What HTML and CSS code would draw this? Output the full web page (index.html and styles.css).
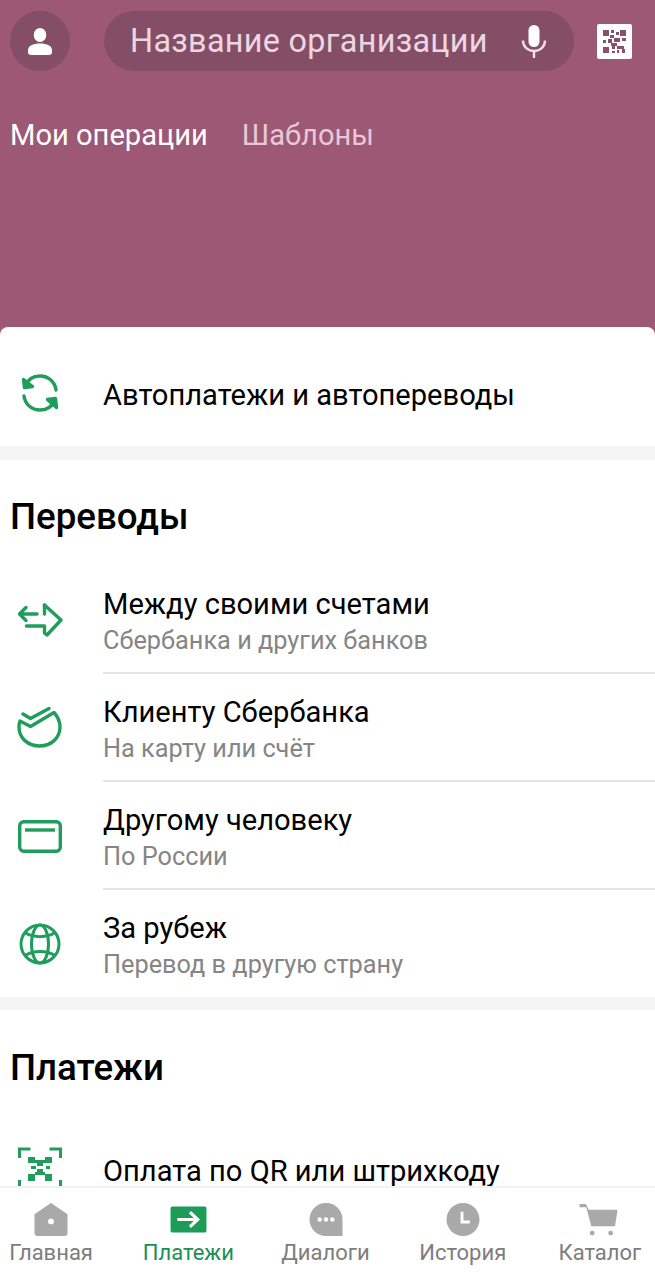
FILE: index.html
```html
<!DOCTYPE html>
<html lang="ru">
<head>
<meta charset="utf-8">
<title>Платежи</title>
<link rel="stylesheet" href="styles.css">
</head>
<body>
<header class="hero">
  <div class="topbar">
    <div class="avatar">
      <svg width="24" height="27" viewBox="0 0 24 27"><ellipse cx="12" cy="7" rx="6.300" ry="7" fill="#fff"/><path d="M0 22.500C0 17.500 5 15.500 12 15.500s12 2 12 7V24a3 3 0 0 1-3 3H3a3 3 0 0 1-3-3z" fill="#fff"/></svg>
    </div>
    <div class="search">
      <span class="search-text">Название организации</span>
      <svg class="mic" width="26" height="33" viewBox="0 0 26 33"><rect x="7.500" y="0" width="11" height="22" rx="5.500" fill="#fff"/><path d="M2 15.500c0 6.500 5 10.500 11 10.500s11-4 11-10.500" fill="none" stroke="#f3dfe9" stroke-width="2.400"/><rect x="11.800" y="26" width="2.400" height="7" fill="#f3dfe9"/></svg>
    </div>
    <div class="qr">
      <svg width="23" height="23" viewBox="0 0 23 23" fill="#87506b"><path d="M0 0h6v6H0zM8 0h3v3H8zM13 2h3v3h-3zM17 0h6v6h-6zM7 5h4v3H7zM11 8h6v4h-6zM5 9h4v4H5zM19 8h4v3h-4zM0 10h3v3H0zM8 13h6v3H8zM0 17h6v6H0zM9 16h3v3H9zM9 21h3v2H9zM14 16h7v3h-7zM19 19h3v4h-3zM14 20h2v3h-2z"/></svg>
    </div>
  </div>
  <nav class="segments">
    <span class="segment segment-active">Мои операции</span>
    <span class="segment">Шаблоны</span>
  </nav>
</header>

<main class="sheet">
  <section class="block block-auto">
    <div class="row row-single">
      <div class="row-icon">
        <svg width="44" height="44" viewBox="0 0 44 44" fill="none" stroke="#1f9d5b" stroke-width="3.400" stroke-linecap="round" stroke-linejoin="round"><path d="M7 15C10 8 15.500 5 22 5c8.500 0 15 6 16 14"/><path d="M6 25c1 8 7.500 14 16 14 6.500 0 12-3 15-10"/><path d="M5.500 8.500 6.500 16.500 14.500 15.500z" fill="#1f9d5b"/><path d="M38.500 36.500 37.500 27.500 29.500 28.500z" fill="#1f9d5b"/></svg>
      </div>
      <div class="row-body"><div class="row-title">Автоплатежи и автопереводы</div></div>
    </div>
  </section>

  <section class="block">
    <h2 class="block-title">Переводы</h2>
    <div class="row">
      <div class="row-icon">
        <svg width="46" height="34" viewBox="0 0 46 34" fill="none" stroke="#1f9d5b" stroke-width="3.400" stroke-linecap="round" stroke-linejoin="round"><path d="M20 11H2.500M9 4.500 2.500 11 9 17.500"/><path d="M27.500 2 44 17 30 32 27.500 30V23H9.500"/><path d="M27.500 2V11"/></svg>
      </div>
      <div class="row-body row-line"><div class="row-title">Между своими счетами</div><div class="row-sub">Сбербанка и других банков</div></div>
    </div>
    <div class="row">
      <div class="row-icon">
        <svg width="46" height="42" viewBox="0 0 46 42" fill="none" stroke="#1f9d5b" stroke-width="3.400" stroke-linecap="round" stroke-linejoin="round"><path d="M3 14 13.500 19.500 37 5.500C41 10 43 15 43 20 43 31 34 39 22.500 39 11 39 2 31 2 20c0-2 .3-4 1-6z"/><path d="M6 7l7.500 4.500L32 1.500"/></svg>
      </div>
      <div class="row-body row-line"><div class="row-title">Клиенту Сбербанка</div><div class="row-sub">На карту или счёт</div></div>
    </div>
    <div class="row">
      <div class="row-icon">
        <svg width="44" height="33" viewBox="0 0 44 33" fill="none" stroke="#1f9d5b" stroke-width="3.400" stroke-linecap="round"><rect x="1.700" y="1.700" width="40.600" height="29.600" rx="4"/><path d="M7 10h30" stroke-linecap="butt"/></svg>
      </div>
      <div class="row-body row-line"><div class="row-title">Другому человеку</div><div class="row-sub">По России</div></div>
    </div>
    <div class="row row-end">
      <div class="row-icon">
        <svg width="42" height="42" viewBox="0 0 42 42" fill="none" stroke="#1f9d5b" stroke-width="3"><circle cx="21" cy="21" r="19"/><ellipse cx="21" cy="21" rx="8.500" ry="19"/><path d="M6 9.500C14 15 28 15 36 9.500M6 32.500C14 27 28 27 36 32.500"/></svg>
      </div>
      <div class="row-body"><div class="row-title">За рубеж</div><div class="row-sub">Перевод в другую страну</div></div>
    </div>
  </section>

  <section class="block block-last">
    <h2 class="block-title">Платежи</h2>
    <div class="row row-single">
      <div class="row-icon">
        <svg width="44" height="44" viewBox="0 0 44 44" fill="none"><path d="M1.500 11V2h11M31.500 2h11v9M1.500 33v9h11M31.500 42h11v-9" stroke="#1f9d5b" stroke-width="3"/><path d="M10 10h7v6h-7zM27 10h7v6h-7zM17 13h10v3H17zM19 16h6v3h-6zM13 19h5v3h-5zM28 19h4v3h-4zM19 22h6v3h-6zM17 25h10v3H17zM10 27h7v7h-7zM27 27h7v7h-7z" fill="#1f9d5b"/></svg>
      </div>
      <div class="row-body"><div class="row-title">Оплата по QR или штрихкоду</div></div>
    </div>
  </section>
</main>

<footer class="tabbar">
  <div class="tab">
    <svg width="34" height="34" viewBox="0 0 34 34"><path d="M17 0 34 11.500V31a3 3 0 0 1-3 3H3a3 3 0 0 1-3-3V11.500z" fill="#a9a9a9"/><circle cx="17" cy="19" r="3" fill="#fff"/></svg>
    <span class="tab-label">Главная</span>
  </div>
  <div class="tab tab-active">
    <svg width="37" height="34" viewBox="0 0 37 34"><rect y="3.500" width="37" height="27" rx="2" fill="#1d9c58"/><path d="M7 17h21M20 9.500l8 7.500-8 7.500" fill="none" stroke="#fff" stroke-width="3.200"/></svg>
    <span class="tab-label">Платежи</span>
  </div>
  <div class="tab">
    <svg width="34" height="34" viewBox="0 0 34 34"><path d="M17 0c9.500 0 17 7.500 17 17v17H17C7.500 34 0 26.500 0 17S7.500 0 17 0z" fill="#a9a9a9"/><circle cx="10.500" cy="17" r="2.300" fill="#fff"/><circle cx="17" cy="17" r="2.300" fill="#fff"/><circle cx="23.500" cy="17" r="2.300" fill="#fff"/></svg>
    <span class="tab-label">Диалоги</span>
  </div>
  <div class="tab">
    <svg width="34" height="34" viewBox="0 0 34 34"><circle cx="17" cy="17" r="17" fill="#a9a9a9"/><path d="M16 9v10.500h8" fill="none" stroke="#fff" stroke-width="3"/></svg>
    <span class="tab-label">История</span>
  </div>
  <div class="tab">
    <svg class="cart" width="39" height="34" viewBox="0 0 39 34"><path d="M0 1h6.500l3 6H38a1 1 0 0 1 1 1l-2.500 16H12L7 4.500H0z" fill="#a9a9a9"/><circle cx="13" cy="31" r="2.500" fill="#a9a9a9"/><circle cx="32" cy="31" r="2.500" fill="#a9a9a9"/></svg>
    <span class="tab-label">Каталог</span>
  </div>
</footer>
</body>
</html>
```
FILE: styles.css
```css
* { box-sizing: border-box; }
html, body { margin: 0; padding: 0; }
body {
  height: 1280px;
  overflow: hidden;
  background: #f5f5f5;
  font-family: Roboto, "Noto Sans", sans-serif;
  color: #000;
}
.hero {
  height: 335px;
  margin-bottom: -8px;
  padding: 11px 23px 0 10px;
  background: #9c5874;
}
.topbar {
  display: flex;
  align-items: center;
  height: 60px;
}
.avatar {
  flex: none;
  width: 60px;
  height: 60px;
  border-radius: 50%;
  background: #844e67;
  display: flex;
  align-items: center;
  justify-content: center;
}
.search {
  flex: none;
  width: 470px;
  height: 60px;
  margin-left: 34px;
  padding: 0 27px 0 26px;
  border-radius: 30px;
  background: #844e67;
  display: flex;
  align-items: center;
  justify-content: space-between;
}
.search-text {
  font-size: 32.400px;
  letter-spacing: .3px;
  line-height: 62px;
  color: #ecd6e0;
}
.qr {
  flex: none;
  width: 35px;
  height: 35px;
  margin-left: 23px;
  border-radius: 2px;
  background: #fff;
  display: flex;
  align-items: center;
  justify-content: center;
}
.segments {
  display: flex;
  gap: 34px;
  margin-top: 47px;
  font-size: 29.100px;
  line-height: 34px;
}
.segment { color: #e8c8d6; }
.segment-active { color: #fff; }
.sheet {
  position: relative;
  display: flex;
  flex-direction: column;
  gap: 14px;
  border-radius: 8px 8px 0 0;
  overflow: hidden;
}
.block { background: #fff; }
.block-auto { height: 119px; padding-top: 12px; }
.block-last { margin-top: -1px; }
.block-title {
  margin: 0;
  padding: 36px 10px 29px;
  font-size: 36.700px;
  line-height: 41px;
  font-weight: 500;
}
.block-last .block-title { padding: 37px 10px 27px; }
.row {
  display: flex;
  height: 108px;
}
.row-end { height: 107px; }
.row-icon {
  flex: none;
  width: 80px;
  display: flex;
  align-items: center;
  justify-content: center;
}
.row-body {
  flex: 1;
  margin-left: 23px;
  padding-top: 20px;
}
.row-single .row-body { padding-top: 38px; }
.row-line { border-bottom: 2px solid #e5e5e5; }
.row-title {
  font-size: 29.100px;
  line-height: 36px;
}
.row-sub {
  margin-top: 1px;
  font-size: 25.300px;
  line-height: 36px;
  color: #858585;
}
.tabbar {
  position: fixed;
  left: -17.500px;
  right: -13.500px;
  bottom: 0;
  height: 94px;
  padding: 15px 0 0;
  background: #fff;
  border-top: 2px solid #f2f2f2;
  display: flex;
}
.tab {
  flex: 1;
  display: flex;
  flex-direction: column;
  align-items: center;
  justify-content: flex-start;
  height: 64px;
}
.tab svg { height: 34px; }
.tab .cart { margin-left: -2px; }
.tab-label {
  margin-top: 3px;
  font-size: 22px;
  line-height: 28px;
  color: #7d7d7d;
}
.tab-active .tab-label { color: #1d8f55; }
```
